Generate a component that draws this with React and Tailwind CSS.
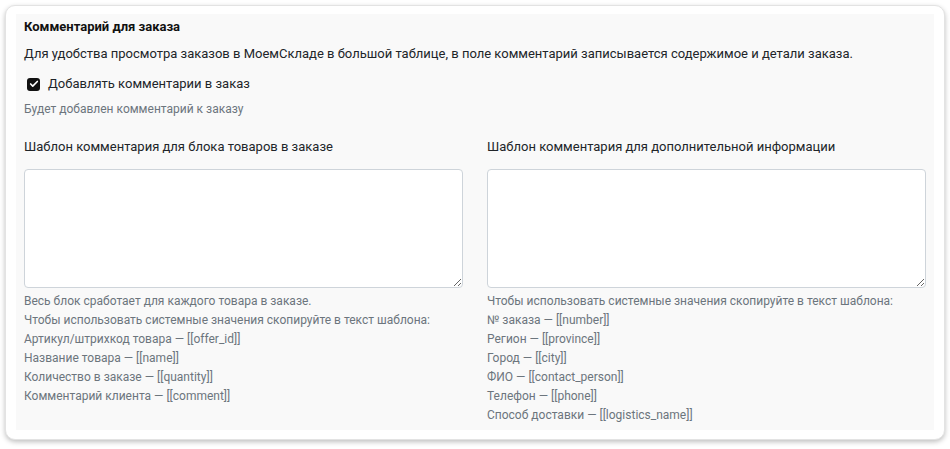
import { Check } from "lucide-react";

const leftNotes = [
  "Весь блок сработает для каждого товара в заказе.",
  "Чтобы использовать системные значения скопируйте в текст шаблона:",
  "Артикул/штрихкод товара — [[offer_id]]",
  "Название товара — [[name]]",
  "Количество в заказе — [[quantity]]",
  "Комментарий клиента — [[comment]]",
];

const rightNotes = [
  "Чтобы использовать системные значения скопируйте в текст шаблона:",
  "№ заказа — [[number]]",
  "Регион — [[province]]",
  "Город — [[city]]",
  "ФИО — [[contact_person]]",
  "Телефон — [[phone]]",
  "Способ доставки — [[logistics_name]]",
];

const TemplateField = ({ label, notes }) => (
  <div className="flex flex-col">
    <label className="text-[13px] text-[#212529] leading-[20px] h-[20px]">{label}</label>
    <textarea className="mt-[12px] h-[119px] w-full rounded-[4px] border border-[#ced4da] bg-white resize-y" />
    <div className="mt-[4px] flex flex-col text-[12px] leading-[19px] text-[#6c757d]">
      {notes.map((n) => (
        <span key={n}>{n}</span>
      ))}
    </div>
  </div>
);

export default function App() {
  return (
    <div className="w-[950px] h-[449px] bg-white p-[5px] pb-[9px] font-['Roboto',sans-serif]">
      <div className="h-full rounded-[10px] border border-[#e3e3e3] bg-white px-[10px] pt-[8px] pb-[9px] shadow-[0_2px_5px_rgba(0,0,0,0.25)]">
        <div className="h-full w-[918px] bg-[#f9f9f9] px-[8px] pt-[3px]">
          <h3 className="text-[13px] font-bold leading-[20px] text-[#111]">Комментарий для заказа</h3>
          <p className="mt-[7px] text-[13px] leading-[20px] text-[#212529]">
            Для удобства просмотра заказов в МоемСкладе в большой таблице, в поле комментарий записывается содержимое и детали заказа.
          </p>
          <label className="mt-[10px] ml-[3px] flex items-center gap-[8px]">
            <span className="flex h-[13px] w-[13px] items-center justify-center rounded-[3px] bg-[#111]">
              <Check size={10} strokeWidth={4} className="text-white" />
            </span>
            <span className="text-[13px] leading-[20px] text-[#212529]">Добавлять комментарии в заказ</span>
          </label>
          <p className="mt-[6px] text-[12px] leading-[18px] text-[#6c757d]">Будет добавлен комментарий к заказу</p>
          <div className="mt-[19px] grid grid-cols-2 gap-[24px]">
            <TemplateField label="Шаблон комментария для блока товаров в заказе" notes={leftNotes} />
            <TemplateField label="Шаблон комментария для дополнительной информации" notes={rightNotes} />
          </div>
        </div>
      </div>
    </div>
  );
}
